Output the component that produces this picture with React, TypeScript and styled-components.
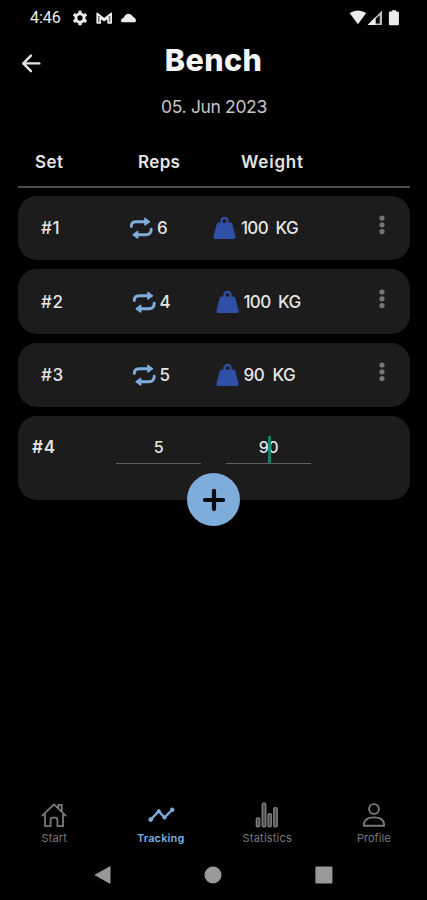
import React from "react";
import styled, { createGlobalStyle } from "styled-components";

const GlobalStyle = createGlobalStyle`
  * { box-sizing: border-box; }
  body { margin: 0; background: #000; }
`;

const Screen = styled.div`
  width: 427px;
  height: 900px;
  display: flex;
  flex-direction: column;
  background: #000;
  color: #e4e4e4;
  font-family: Inter, "Noto Sans", sans-serif;
  overflow: hidden;
`;

const StatusBar = styled.div`
  height: 36px;
  flex: none;
  display: flex;
  align-items: center;
  padding: 0 28px 0 30px;
  color: #ececec;
`;

const Clock = styled.span`
  width: 42px;
  font: 400 16px/20px Roboto, sans-serif;
  letter-spacing: 0;
`;

const StatusIcons = styled.svg`
  display: block;
`;

const Spacer = styled.div`
  flex: 1;
`;

const Header = styled.header`
  height: 49px;
  flex: none;
  display: grid;
  grid-template-columns: 60px 1fr 60px;
  align-items: center;
`;

const BackButton = styled.button`
  border: 0;
  padding: 0 0 0 21px;
  background: none;
  color: #e4e4e4;
  display: flex;
  margin-top: 5px;
`;

const Title = styled.h1`
  margin: 0 0 2px;
  text-align: center;
  font-size: 30.5px;
  line-height: 40px;
  font-weight: 800;
  letter-spacing: 0.4px;
  color: #f5f5f5;
`;

const DateLine = styled.div`
  height: 42px;
  flex: none;
  text-align: center;
  font-size: 17.5px;
  line-height: 43px;
  letter-spacing: -0.35px;
  padding-left: 1px;
  color: #c6c6c6;
`;

const TableHead = styled.div`
  height: 61px;
  flex: none;
  margin: 0 17px 0 18px;
  border-bottom: 2px solid #4c4c4c;
  display: grid;
  grid-template-columns: 103px 103px 1fr;
  padding: 24px 0 0 17px;
  font-size: 17px;
  line-height: 22px;
  font-weight: 600;
`;

const HeadCell = styled.span<{ $tracking: number }>`
  letter-spacing: ${(p) => p.$tracking}px;
`;

const SetList = styled.main`
  display: flex;
  flex-direction: column;
  gap: 9px;
  padding: 8px 17px 0 18px;
`;

const SetCard = styled.div`
  height: 64.4px;
  border-radius: 19px;
  background: #1c1c1c;
  display: flex;
  align-items: center;
  padding-left: 23px;
  font-size: 17px;
  font-weight: 500;
  line-height: 22px;
`;

const SetNumber = styled.span<{ $width: number }>`
  width: ${(p) => p.$width}px;
  letter-spacing: 0.6px;
`;

const Reps = styled.span`
  width: 84px;
  display: flex;
  align-items: center;
  gap: 4px;
`;

const Load = styled.span`
  flex: 1;
  display: flex;
  align-items: center;
  gap: 5px;
`;

const LoadText = styled.span<{ $tracking: number }>`
  white-space: pre;
  letter-spacing: ${(p) => p.$tracking}px;
`;

const MenuButton = styled.button`
  width: 20px;
  border: 0;
  padding: 0;
  margin: 0 18px 6px 0;
  background: none;
  color: #757575;
  display: flex;
  justify-content: center;
`;

const EntryCard = styled.div`
  position: relative;
  height: 83.5px;
  border-radius: 19px;
  background: #1c1c1c;
  display: grid;
  grid-template-columns: 59px 85px 85px;
  column-gap: 25px;
  align-items: start;
  padding: 19px 0 0 14px;
`;

const EntryNumber = styled.span`
  font-size: 17px;
  line-height: 25px;
  font-weight: 600;
  letter-spacing: 0.8px;
`;

const Field = styled.div`
  position: relative;
  height: 29px;
  border-bottom: 1.5px solid #606060;
  text-align: center;
  font-size: 16px;
  font-weight: 500;
  line-height: 24px;
  letter-spacing: -0.4px;
`;

const Caret = styled.i`
  position: absolute;
  left: 42px;
  top: 1px;
  width: 3px;
  height: 27px;
  background: #15886f;
  opacity: 0.9;
`;

const AddButton = styled.button`
  position: absolute;
  left: 169.2px;
  top: 56.8px;
  width: 53.2px;
  height: 53.2px;
  border: 0;
  padding: 0;
  border-radius: 50%;
  background: #7eaddc;
  color: #080b0e;
  display: flex;
  align-items: center;
  justify-content: center;
`;

const TabBar = styled.nav`
  height: 50px;
  flex: none;
  display: grid;
  grid-template-columns: repeat(4, 1fr);
  padding-left: 1px;
`;

const Tab = styled.div<{ $active?: boolean; $tracking: number }>`
  display: flex;
  flex-direction: column;
  align-items: center;
  color: ${(p) => (p.$active ? "#7eaddc" : "#7a7a7a")};
  font-size: 11px;
  line-height: 14px;
  font-weight: ${(p) => (p.$active ? 600 : 400)};
  letter-spacing: ${(p) => p.$tracking}px;
  gap: 1px;
`;

const SystemBar = styled.div`
  height: 50px;
  flex: none;
  display: flex;
  align-items: center;
  justify-content: space-between;
  padding: 0 94.5px 1px 94px;
`;

const RepeatIcon = () => (
  <svg width="24" height="24" viewBox="0 0 24 24" fill="none" stroke="#7eaddc" strokeWidth="2.9" strokeLinecap="round" strokeLinejoin="round">
    <path d="M2.3 10.6C2.3 7.2 4 5.7 7 5.7H15" />
    <path d="M15.8 2.2 20.6 5.7 15.8 9.2Z" fill="#7eaddc" strokeWidth="1.2" />
    <path d="M22.2 13.2C22.2 16.8 20.2 18.7 17 18.7H9" />
    <path d="M8.8 15.2 4 18.7 8.8 22.2Z" fill="#7eaddc" strokeWidth="1.2" />
  </svg>
);

const WeightIcon = () => (
  <svg width="23" height="24" viewBox="0 0 23 24">
    <circle cx="11.5" cy="5.1" r="3.1" fill="none" stroke="#3050a8" strokeWidth="2.3" />
    <path d="M5.6 6.5H17.4Q18.8 6.5 19.3 7.9L22.5 20.6Q23 23.1 20.8 23.1H2.2Q0 23.1.5 20.6L3.7 7.9Q4.2 6.5 5.6 6.5Z" fill="#3050a8" />
    <circle cx="11.5" cy="5.2" r="1.6" fill="#1c1c1c" />
  </svg>
);

const sets = [
  { id: 1, reps: 6, load: "100  KG", width: 88, tracking: -0.7 },
  { id: 2, reps: 4, load: "100  KG", width: 90.5, tracking: -0.7 },
  { id: 3, reps: 5, load: "90  KG", width: 90.5, tracking: -0.45 },
];

export default function App() {
  return (
    <Screen>
      <GlobalStyle />
      <StatusBar>
        <Clock>4:46</Clock>
        <StatusIcons width="66" height="18" viewBox="0 0 66 18" fill="currentColor">
          <circle cx="8" cy="9" r="4.1" fill="none" stroke="currentColor" strokeWidth="2.9" />
          <path d="M8 1.7v3M8 13.3v3M1.7 5.4l2.6 1.5M11.7 11.1l2.6 1.5M1.7 12.6l2.6-1.5M11.7 6.9l2.6-1.5" stroke="currentColor" strokeWidth="3.2" />
          <path d="M25.2 14V4.3l7 5.5 7-5.5V14h-3.1V8.5l-3.9 3-3.9-3V14Z" fill="#777" stroke="currentColor" strokeWidth="1.6" strokeLinejoin="round" />
          <path d="M50.7 13.3Q48.7 13.2 48.9 11.5 49.2 9.3 51.5 9 53.3 4.8 56.6 4.7 59.5 4.8 60.8 7.6 63.9 8.9 64.1 11.7 64 13.1 62.6 13.3Z" />
        </StatusIcons>
        <Spacer />
        <StatusIcons width="50" height="18" viewBox="0 0 50 18" fill="currentColor">
          <path d="M.6 4.1q8.4-5 16.6 0L8.9 15.2Z" />
          <path fillRule="evenodd" d="M18.6 16 33 1.6V16ZM26.5 10v4.4h4.2V6.2Z" opacity=".8" />
          <path d="M18.6 16 26.5 8v8Z" />
          <path d="M41 2.6h1.8V1.2h4.2v1.4h1.8q1.1 0 1.1 1.1v11.2q0 1.3-1.1 1.3H41q-1.1 0-1.1-1.3V3.7q0-1.1 1.1-1.1Z" />
        </StatusIcons>
      </StatusBar>

      <Header>
        <BackButton aria-label="Back">
          <svg width="20" height="20" viewBox="0 0 20 20" fill="none" stroke="currentColor" strokeWidth="2.4" strokeLinecap="round" strokeLinejoin="round">
            <path d="M18.4 10.4H2.3M10 2.6 2.2 10.4l7.8 7.8" />
          </svg>
        </BackButton>
        <Title>Bench</Title>
      </Header>
      <DateLine>05. Jun 2023</DateLine>

      <TableHead>
        <HeadCell $tracking={0.5}>Set</HeadCell>
        <HeadCell $tracking={0.35}>Reps</HeadCell>
        <HeadCell $tracking={0.8}>Weight</HeadCell>
      </TableHead>

      <SetList>
        {sets.map((s) => (
          <SetCard key={s.id}>
            <SetNumber $width={s.width}>#{s.id}</SetNumber>
            <Reps>
              <RepeatIcon />
              {s.reps}
            </Reps>
            <Load>
              <WeightIcon />
              <LoadText $tracking={s.tracking}>{s.load}</LoadText>
            </Load>
            <MenuButton aria-label="Set options">
              <svg width="8" height="20" viewBox="0 0 8 20" fill="currentColor">
                <circle cx="4" cy="3" r="2.6" />
                <circle cx="4" cy="9.8" r="2.6" />
                <circle cx="4" cy="16.6" r="2.6" />
              </svg>
            </MenuButton>
          </SetCard>
        ))}
        <EntryCard>
          <EntryNumber>#4</EntryNumber>
          <Field>5</Field>
          <Field>
            90
            <Caret />
          </Field>
          <AddButton aria-label="Add set">
            <svg width="24" height="24" viewBox="0 0 24 24" stroke="currentColor" strokeWidth="4.2" strokeLinecap="round">
              <path d="M12 2.9V21.1M2.9 12H21.1" />
            </svg>
          </AddButton>
        </EntryCard>
      </SetList>

      <Spacer />

      <TabBar>
        <Tab $tracking={0.1}>
          <svg width="28" height="30" viewBox="0 0 28 30" fill="none" stroke="currentColor" strokeWidth="1.8" strokeLinejoin="round" strokeLinecap="round">
            <path d="M2.3 15.6 14 4.3 25.7 15.6M5 14V26.2h5.6v-6.5q0-2 2-2h2.8q2 0 2 2v6.5H23V14M18.4 7.4V4.8h3.4v6" />
          </svg>
          Start
        </Tab>
        <Tab $active $tracking={0.15}>
          <svg width="28" height="30" viewBox="0 0 28 30" fill="currentColor" stroke="currentColor">
            <path d="M3.7 19.6 11.7 11.2 17.5 17.6 25.2 9.8" fill="none" strokeWidth="2.3" />
            <circle cx="3.7" cy="19.6" r="1.9" />
            <circle cx="11.7" cy="11.2" r="1.6" />
            <circle cx="17.5" cy="17.6" r="1.6" />
            <circle cx="25.2" cy="9.8" r="1.8" />
          </svg>
          Tracking
        </Tab>
        <Tab $tracking={0.2}>
          <svg width="28" height="30" viewBox="0 0 28 30" fill="#4c4c4c" stroke="currentColor" strokeWidth="1.5">
            <rect x="3.4" y="18" width="3.2" height="8.8" rx="1.3" />
            <rect x="9.3" y="3.2" width="3.4" height="23.6" rx="1.4" />
            <rect x="15.1" y="13.7" width="3.2" height="13.1" rx="1.3" />
            <rect x="20.8" y="7.7" width="3.4" height="19.1" rx="1.4" />
          </svg>
          Statistics
        </Tab>
        <Tab $tracking={0.05}>
          <svg width="28" height="30" viewBox="0 0 28 30" fill="none" stroke="currentColor" strokeWidth="1.9">
            <circle cx="14" cy="9" r="4.9" />
            <path d="M3.9 25.8V24C4.5 19.5 8 17.4 14 17.4s9.5 2.1 10.1 6.6v1.8Z" strokeLinejoin="round" />
          </svg>
          Profile
        </Tab>
      </TabBar>

      <SystemBar>
        <svg width="17" height="18" viewBox="0 0 17 18" fill="#999"><path d="M1.2 9 16 .7V17.3Z" stroke="#999" strokeLinejoin="round" /></svg>
        <svg width="18" height="18" viewBox="0 0 18 18" fill="#999"><circle cx="9" cy="9" r="8.5" /></svg>
        <svg width="18" height="18" viewBox="0 0 18 18" fill="#999"><rect x=".4" y=".5" width="17" height="17" rx="1" /></svg>
      </SystemBar>
    </Screen>
  );
}
